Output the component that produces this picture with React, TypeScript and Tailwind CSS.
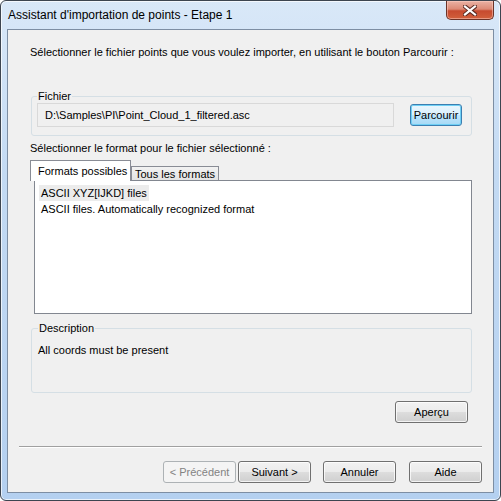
const btn =
  "flex h-[22px] w-[73px] items-center justify-center rounded-[3px] border border-[#707070] bg-[linear-gradient(180deg,#f2f2f2_0%,#ebebeb_50%,#dddddd_51%,#cfcfcf_100%)] shadow-[inset_0_0_0_1px_rgba(255,255,255,0.75)] text-black";

const btnDisabled =
  "flex h-[22px] w-[73px] items-center justify-center rounded-[3px] border border-[#adb2b5] bg-[#f4f4f4] text-[#838383]";

function CloseGlyph() {
  return (
    <svg width="14" height="11" viewBox="0 0 14 11">
      <path d="M2 1.5 L12 9.5 M12 1.5 L2 9.5" stroke="#5b2a22" strokeWidth="4.2" strokeLinecap="square" />
      <path d="M2 1.5 L12 9.5 M12 1.5 L2 9.5" stroke="#ffffff" strokeWidth="2.2" strokeLinecap="square" />
    </svg>
  );
}

export default function App() {
  return (
    <div className="flex h-[501px] w-[501px] flex-col rounded-[6px] border border-[#3d4550] bg-[linear-gradient(180deg,#d9e8f8_0%,#c3daf3_35%,#b4d0f0_100%)] shadow-[inset_0_0_0_1px_rgba(255,255,255,0.7)] font-['Liberation_Sans',sans-serif] text-[11px] text-black whitespace-nowrap">
      {/* title bar */}
      <div className="flex h-[28px] items-start justify-between pl-[7px] pr-[6px]">
        <div className="flex h-[28px] items-center text-[12px] leading-[15px]">Assistant d'importation de points - Etape 1</div>
        <div className="flex h-[19px] w-[48px] items-center justify-center rounded-b-[5px] border border-t-0 border-[#6b3328] bg-[linear-gradient(180deg,#eab2a4_0%,#dc8a76_45%,#c74a2f_55%,#d2603c_100%)] shadow-[inset_0_0_0_1px_rgba(255,210,200,0.5)]">
          <CloseGlyph />
        </div>
      </div>

      {/* client area */}
      <div className="mx-[6px] flex h-[464px] w-[487px] flex-col border border-[#7d8ea3] bg-[#f0f0f0]">
        <p className="ml-[22px] mt-[15px] leading-[15px]">
          Sélectionner le fichier points que vous voulez importer, en utilisant le bouton Parcourir :
        </p>

        <fieldset className="ml-[23px] mt-[29px] h-[47px] w-[441px] rounded-[3px] border border-[#d5dfe5] pl-[5px]">
          <legend className="px-[1px] leading-[14px]">Fichier</legend>
          <div className="flex items-center">
            <div className="flex h-[24px] w-[357px] items-center border border-[#d9d9d9] bg-[#f0f0f0] pl-[7px]">
              D:\Samples\PI\Point_Cloud_1_filtered.asc
            </div>
            <div className="ml-[16px] flex h-[22px] w-[52px] items-center justify-center rounded-[3px] border border-[#3c7fb1] bg-[linear-gradient(180deg,#eaf6fd_0%,#d9f0fc_50%,#bee6fd_51%,#a7d9f5_100%)] shadow-[inset_0_0_0_1px_#6fd0f5]">
              Parcourir
            </div>
          </div>
        </fieldset>

        <p className="ml-[22px] mt-[5px] leading-[15px]">Sélectionner le format pour le fichier sélectionné :</p>

        {/* tabs */}
        <div className="ml-[22px] mt-[4px] flex h-[20px] items-end">
          <div className="relative top-px flex h-[21px] w-[101px] items-center border border-b-0 border-[#898c95] bg-white pl-[7px]">
            Formats possibles
          </div>
          <div className="flex h-[14px] w-[88px] items-center border border-b-0 border-[#898c95] bg-[linear-gradient(180deg,#f2f2f2_0%,#e3e3e3_100%)] pl-[3px] pt-[2px]">
            Tous les formats
          </div>
        </div>

        {/* list */}
        <div className="ml-[26px] h-[134px] w-[438px] border border-[#828790] bg-white pl-[4px] pt-[4px]">
          <div className="flex h-[16px] w-fit items-center bg-[#ececec] px-[2px]">ASCII XYZ[IJKD] files</div>
          <div className="flex h-[16px] items-center px-[2px]">ASCII files. Automatically recognized format</div>
        </div>

        <fieldset className="ml-[23px] mt-[7px] h-[72px] w-[441px] rounded-[3px] border border-[#d5dfe5] pl-[6px]">
          <legend className="px-[1px] leading-[14px]">Description</legend>
          <div className="mt-[8px] leading-[15px]">All coords must be present</div>
        </fieldset>

        <div className="mr-[25px] mt-[8px] self-end">
          <div className={btn}>Aperçu</div>
        </div>

        <div className="ml-[11px] mt-[23px] h-[2px] w-[463px] border-t border-b border-t-[#a0a0a0] border-b-white" />

        <div className="mr-[11px] mt-[13px] flex self-end">
          <div className={btnDisabled}>&lt; Précédent</div>
          <div className={`${btn} ml-[2px]`}>Suivant &gt;</div>
          <div className={`${btn} ml-[12px]`}>Annuler</div>
          <div className={`${btn} ml-[13px]`}>Aide</div>
        </div>
      </div>
    </div>
  );
}
